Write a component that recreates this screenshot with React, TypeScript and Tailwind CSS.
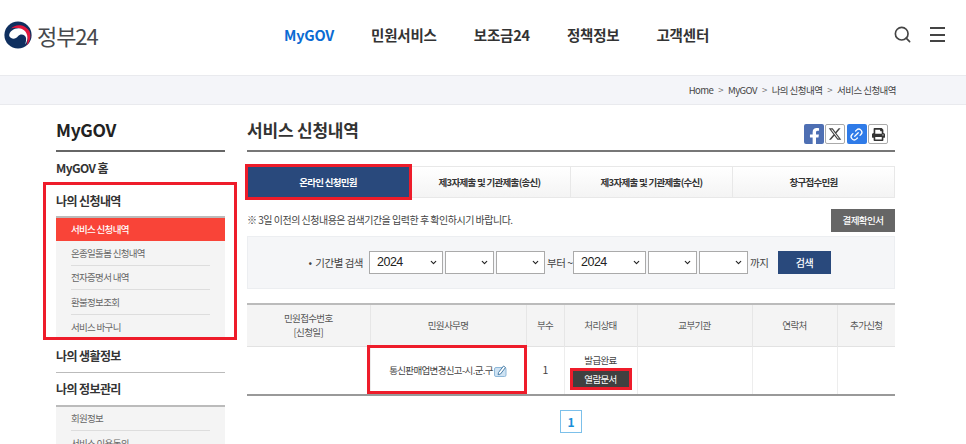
import React from "react";
import { Search, Link2, ChevronDown } from "lucide-react";
import { FaFacebookF, FaPrint } from "react-icons/fa";
import { FaXTwitter } from "react-icons/fa6";

function Logo() {
  return (
    <svg width="28" height="28" viewBox="0 0 28 28" className="shrink-0">
      <circle cx="14" cy="14" r="13.6" fill="#0f2f5f" />
      <path d="M7 7.5C11 2.8 21 2.4 25.6 10.5C27.4 15.5 26 21 22.5 24.6C24.8 18 23.4 10.8 17.5 8.2C13.5 6.6 10 6.4 7 7.5z" fill="#e4173e" />
      <path d="M5.2 15C5 9.5 12.5 5.8 18 8C24 10.4 25 18.5 21.2 23.5C22.6 19 22.4 16 20.8 14.8C18.6 13 15.8 13.2 14 15.2C12 18 7.6 19 5.2 15z" fill="#fff" />
    </svg>
  );
}

function Header() {
  return (
    <header className="h-[75px] flex items-center bg-white relative">
      <div className="flex items-center ml-[4px] w-[280px] gap-[5px] mb-[6px]">
        <Logo />
        <span className="text-[22px] leading-none tracking-[-1.1px] text-[#47494d] font-normal">정부24</span>
      </div>
      <nav className="flex gap-[37px] text-[14.5px] font-bold text-[#333] tracking-[-0.2px] mb-[6px]">
        <a className="text-[#0b6bd3]">MyGOV</a>
        <a>민원서비스</a>
        <a>보조금24</a>
        <a>정책정보</a>
        <a>고객센터</a>
      </nav>
      <div className="ml-auto mr-[21px] flex items-center gap-[18px] text-[#444] mb-[6px]">
        <Search size={19} strokeWidth={2.1} />
        <div className="w-[15px] flex flex-col gap-[4.5px]">
          <span className="h-[2px] bg-[#444]" />
          <span className="h-[2px] bg-[#444]" />
          <span className="h-[2px] bg-[#444]" />
        </div>
      </div>
    </header>
  );
}

function Crumbs() {
  const items = ["Home", "MyGOV", "나의 신청내역", "서비스 신청내역"];
  return (
    <div className="h-[30px] bg-[#f4f5f9] border-y border-[#e9eaee] flex items-center justify-end pr-[70px] text-[9.5px] text-[#444] tracking-[-0.55px]">
      {items.map((t, i) => (
        <React.Fragment key={t}>
          {i > 0 && <span className="mx-[5px] text-[#777]">&gt;</span>}
          <span>{t}</span>
        </React.Fragment>
      ))}
    </div>
  );
}

function Sidebar() {
  const sub = ["온종일돌봄 신청내역", "전자증명서 내역", "환불정보조회", "서비스 바구니"];
  const head = "flex items-center text-[12px] font-semibold text-[#333] tracking-[-0.6px]";
  const list = "border-t-2 border-[#bbb] bg-[#f4f4f4] text-[9.5px] text-[#666] tracking-[-0.7px]";
  return (
    <aside className="w-[169px] shrink-0 relative">
      <h2 className="h-[37px] border-b-2 border-[#666] text-[17.5px] font-bold text-[#222] leading-[30px] tracking-[-0.3px]">MyGOV</h2>
      <div className={`h-[32px] ${head}`}>MyGOV 홈</div>
      <div className={`h-[32px] pt-[2px] ${head}`}>나의 신청내역</div>
      <ul className={list}>
        <li className="h-[23px] bg-[#f94438] text-white font-medium pl-[15px] flex items-center">서비스 신청내역</li>
        {sub.map((t) => (
          <li key={t} className="h-[24.5px] mx-[15px] flex items-center border-b border-[#ddd] last:border-b-0">{t}</li>
        ))}
      </ul>
      <div className="absolute left-[-13px] top-[67px] w-[194px] h-[158px] border-[3px] border-[#ee1c2a] pointer-events-none" />
      <div className={`h-[34px] ${head} border-b border-[#bbb]`}>나의 생활정보</div>
      <div className={`h-[32px] ${head}`}>나의 정보관리</div>
      <ul className={list}>
        <li className="h-[24px] mx-[15px] flex items-center border-b border-[#ddd]">회원정보</li>
        <li className="h-[25px] mx-[15px] flex items-center">서비스 이용동의</li>
      </ul>
    </aside>
  );
}

function Share() {
  return (
    <div className="flex gap-[1.5px] mt-[9px] mr-[7px]">
      <span className="w-[20px] h-[20px] rounded-[2px] bg-[#4e6fb3] text-white flex items-end justify-center overflow-hidden"><FaFacebookF size={17} className="translate-x-[1px] translate-y-[1px]" /></span>
      <span className="w-[20px] h-[20px] rounded-[2px] bg-white border border-[#aaa] text-[#444] flex items-center justify-center"><FaXTwitter size={14} /></span>
      <span className="w-[20px] h-[20px] rounded-[2px] bg-[#2f7be8] text-white flex items-center justify-center"><Link2 size={15} className="-rotate-45" /></span>
      <span className="w-[20px] h-[20px] rounded-[2px] bg-white border border-[#aaa] text-[#333] flex items-center justify-center"><FaPrint size={13} /></span>
    </div>
  );
}

function Tabs() {
  const tabs = ["제3자제출 및 기관제출(송신)", "제3자제출 및 기관제출(수신)", "창구접수민원"];
  return (
    <div className="flex h-[32px] mt-[14px] text-[9.5px] font-bold text-[#333] tracking-[-0.7px]">
      <div className="w-[162px] relative bg-[#29497c] text-white flex items-center justify-center">
        온라인 신청민원
        <div className="absolute -left-[2px] -top-[2px] -right-[3px] -bottom-[2px] border-[3px] border-[#ee1c2a]" />
      </div>
      {tabs.map((t) => (
        <div key={t} className="w-[162px] flex items-center justify-center border border-l-0 border-[#e8e8e8] bg-linear-to-b from-white to-[#f4f4f4]">{t}</div>
      ))}
    </div>
  );
}

function Sel({ w, v }: { w: string; v?: string }) {
  return (
    <span className={`relative ${w} h-[23px] block`}>
      <select defaultValue={v ?? ""} className="appearance-none w-full h-full bg-white border border-[#aaa] text-[12.5px] pl-[7px] text-[#222] rounded-none" style={{ fontFamily: "'Liberation Sans', sans-serif" }}>
        <option value="">{""}</option>
        <option value="2024">2024</option>
      </select>
      <ChevronDown size={9} strokeWidth={3} className="absolute right-[5px] top-[7px] text-[#222] pointer-events-none" />
    </span>
  );
}

function SearchBox() {
  return (
    <div className="h-[53px] bg-[#f5f6f8] border border-[#eceef1] flex items-center text-[10.5px] text-[#444] tracking-[-0.5px]">
      <span className="w-[121px] text-right pr-[6px] shrink-0">•&nbsp; 기간별 검색</span>
      <div className="flex items-center gap-[2px]">
        <Sel w="w-[74px]" v="2024" />
        <Sel w="w-[49px]" />
        <Sel w="w-[49px]" />
        <span className="w-[24px] whitespace-nowrap">부터 ~</span>
        <Sel w="w-[73px]" v="2024" />
        <Sel w="w-[49px]" />
        <Sel w="w-[49px]" />
        <span className="w-[20px] whitespace-nowrap">까지</span>
        <button className="ml-[6px] w-[53px] h-[23px] bg-[#29497c] text-white text-[10px] font-medium">검색</button>
      </div>
    </div>
  );
}

function Table() {
  const th = "border-l border-[#e6e6e6] first:border-l-0 font-normal text-[9.5px] text-[#555] tracking-[-0.65px] leading-[14px]";
  const td = "border-l border-[#ededed] first:border-l-0 text-center text-[9.5px] text-[#444] tracking-[-0.65px]";
  return (
    <table className="w-full mt-[14px] border-collapse table-fixed border-t-2 border-[#bbb] border-b-2 border-b-[#999]">
      <colgroup>
        <col className="w-[123px]" /><col className="w-[156px]" /><col className="w-[38px]" /><col className="w-[73px]" /><col className="w-[115px]" /><col className="w-[85px]" /><col className="w-[58px]" />
      </colgroup>
      <thead>
        <tr className="h-[42px] bg-[#f4f4f4] border-b border-[#e2e2e2]">
          <th className={th}>민원접수번호<br />[신청일]</th>
          <th className={th}>민원사무명</th>
          <th className={th}>부수</th>
          <th className={th}>처리상태</th>
          <th className={th}>교부기관</th>
          <th className={th}>연락처</th>
          <th className={th}>추가신청</th>
        </tr>
      </thead>
      <tbody>
        <tr className="h-[49px]">
          <td className={td}></td>
          <td className={`${td} relative`}>
            <span className="inline-flex items-center gap-[1px] whitespace-nowrap">
              통신판매업변경신고-시.군.구
              <svg width="13" height="13" viewBox="0 0 13 13">
                <rect x="0.5" y="3.5" width="11.5" height="9" rx="1.5" fill="#cfe3f3" stroke="#8fb8d8" />
                <path d="M4.5 8.5L9.5 2l2 1.5-5 6.5-2.4.7z" fill="#fff" stroke="#4a7ea8" strokeWidth="1" />
              </svg>
            </span>
            <div className="absolute -left-[4px] -top-[2px] -right-[1px] bottom-0 border-[3px] border-[#ee1c2a]" />
          </td>
          <td className={`${td} text-[10.5px]`}>1</td>
          <td className={td}>
            <div className="flex flex-col items-center pt-[2px]">
              <span className="leading-[14px]">발급완료</span>
              <span className="mt-[1px] w-[62px] h-[22px] border-[3px] border-[#ee1c2a] bg-[#404040] text-white text-[9.5px] flex items-center justify-center">열람문서</span>
            </div>
          </td>
          <td className={td}></td>
          <td className={td}></td>
          <td className={td}></td>
        </tr>
      </tbody>
    </table>
  );
}

export default function App() {
  return (
    <div className="w-[966px] h-[444px] overflow-hidden bg-white" style={{ fontFamily: "'Noto Sans CJK KR', 'Noto Sans', sans-serif" }}>
      <Header />
      <Crumbs />
      <div className="flex pl-[56px] pr-[71px] gap-[22px] pt-[10px]">
        <Sidebar />
        <main className="w-[648px]">
          <div className="h-[37px] border-b-2 border-[#777] flex justify-between items-start">
            <h1 className="text-[17px] font-bold text-[#333] leading-[30px] tracking-[-0.2px]">서비스 신청내역</h1>
            <Share />
          </div>
          <Tabs />
          <div className="h-[38px] flex items-start justify-between pt-[11px] text-[10px] text-[#444] tracking-[-0.5px]">
            <span className="leading-[22px]">※ 3일 이전의 신청내용은 검색기간을 입력한 후 확인하시기 바랍니다.</span>
            <button className="w-[64px] h-[23px] bg-[#666] text-white text-[9.5px] font-medium">결제확인서</button>
          </div>
          <SearchBox />
          <Table />
          <div className="flex justify-center mt-[14px]">
            <span className="w-[22px] h-[23px] flex items-center justify-center border border-[#7cc0ea] text-[#1a8fd8] font-bold text-[12px]">1</span>
          </div>
        </main>
      </div>
    </div>
  );
}
